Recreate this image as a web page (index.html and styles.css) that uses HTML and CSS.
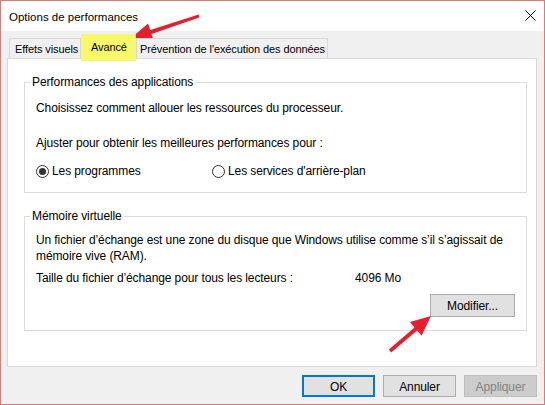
FILE: index.html
```html
<!DOCTYPE html>
<html lang="fr">
<head>
<meta charset="utf-8">
<title>Options de performances</title>
<link rel="stylesheet" href="styles.css">
</head>
<body>
<div class="window">
  <div class="titlebar">
    <span class="title">Options de performances</span>
    <svg class="close" width="11" height="11" viewBox="0 0 11 11"><path d="M0.5 0.5L10.5 10.5M10.5 0.5L0.5 10.5" stroke="#000" stroke-width="1" fill="none"/></svg>
  </div>
  <div class="content">
    <div class="tabs">
      <div class="tab tab-first">Effets visuels</div>
      <div class="tab tab-selected">Avancé</div>
      <div class="tab tab-last">Prévention de l'exécution des données</div>
    </div>
    <div class="panel">
      <fieldset class="group group-apps">
        <legend>Performances des applications</legend>
        <p class="line">Choisissez comment allouer les ressources du processeur.</p>
        <p class="line line-adjust">Ajuster pour obtenir les meilleures performances pour :</p>
        <div class="radios">
          <label class="radio radio-first"><span class="circle checked"></span>Les programmes</label>
          <label class="radio"><span class="circle"></span>Les services d'arrière-plan</label>
        </div>
      </fieldset>
      <fieldset class="group group-mem">
        <legend>Mémoire virtuelle</legend>
        <p class="line">Un fichier d’échange est une zone du disque que Windows utilise comme s’il s’agissait de mémoire vive (RAM).</p>
        <div class="size-row">
          <span>Taille du fichier d’échange pour tous les lecteurs :</span>
          <span>4096 Mo</span>
        </div>
        <div class="modify-row">
          <button class="btn btn-modify">Modifier...</button>
        </div>
      </fieldset>
    </div>
    <div class="footer">
      <button class="btn btn-default">OK</button>
      <button class="btn">Annuler</button>
      <button class="btn btn-disabled">Appliquer</button>
    </div>
  </div>
  <svg class="arrows" width="545" height="405" viewBox="0 0 545 405">
    <polygon fill="#e5202e" points="130,39 153.7,40.5 151.5,33.9 199.3,17.5 198.7,14.6 150.3,30.1 148.1,23.5"/>
    <polygon fill="#e5202e" points="431,316 421.6,335.8 417.1,330.5 391.2,352.4 388.8,349.6 414.5,327.5 410,322.1"/>
  </svg>
</div>
</body>
</html>
```

FILE: styles.css
```css
* { box-sizing: border-box; }
html, body { margin: 0; padding: 0; background: #f0f0f0; }
body {
  font-family: "Liberation Sans", Arial, sans-serif;
  font-size: 12px;
  line-height: 16px;
  letter-spacing: -0.1px;
  color: #000;
}
.window {
  position: relative;
  width: 545px;
  height: 405px;
  border: 1px solid #dc7b73;
  background: #f0f0f0;
  display: flex;
  flex-direction: column;
}
.titlebar {
  height: 30px;
  background: #fff;
  display: flex;
  align-items: center;
  justify-content: space-between;
  padding: 1px 8px 0 8px;
}
.title { font-size: 11.5px; letter-spacing: 0; }
.close { display: block; margin-top: -2px; }
.content {
  flex: 1;
  padding: 0 7px 0 6px;
  display: flex;
  flex-direction: column;
}
.tabs {
  height: 27px;
  display: flex;
  align-items: flex-end;
  padding-left: 2px;
  position: relative;
  z-index: 1;
  font-size: 11px;
}
.tab {
  height: 20px;
  border: 1px solid #d9d9d9;
  border-bottom: none;
  background: #f0f0f0;
  padding: 2px 0 0 5px;
  white-space: nowrap;
}
.tab-first { width: 72px; }
.tab-selected {
  width: 55px;
  height: 27px;
  margin-bottom: -3px;
  background: #f8f86a;
  border: none;
  padding: 5px 0 0 10px;
}
.tab-last { width: 192px; padding-left: 3px; }
.panel {
  height: 309px;
  background: #fff;
  border: 1px solid #d9d9d9;
  padding: 15px 9px 0 16px;
  display: flex;
  flex-direction: column;
}
.group {
  margin: 0;
  border: 1px solid #dcdcdc;
  padding: 10px 11px 0 11px;
  min-width: 0;
}
.group legend {
  padding: 0 2px;
  margin-left: -6px;
  line-height: 16px;
}
.group-apps { height: 119px; flex-shrink: 0; }
.group-mem { height: 123px; margin-top: 15px; padding-top: 8px; flex-shrink: 0; }
.line { margin: 0; }
.line-adjust { margin-top: 19px; }
.radios {
  margin-top: 12px;
  display: flex;
  align-items: center;
}
.radio {
  display: flex;
  align-items: center;
  gap: 3px;
}
.radio-first { width: 176px; }
.circle {
  width: 13px;
  height: 13px;
  border: 1px solid #333;
  border-radius: 50%;
  background: #fff;
  display: flex;
  align-items: center;
  justify-content: center;
}
.circle.checked::after {
  content: "";
  width: 7px;
  height: 7px;
  border-radius: 50%;
  background: #333;
}
.size-row {
  margin-top: 6px;
  display: grid;
  grid-template-columns: 319px auto;
}
.modify-row {
  margin-top: 8px;
  display: flex;
  justify-content: flex-end;
}
.btn {
  font-family: inherit;
  font-size: 12px;
  letter-spacing: -0.1px;
  color: #000;
  background: #e1e1e1;
  border: 1px solid #adadad;
  height: 22px;
  width: 73px;
  padding: 1px 0 0;
  margin: 0;
}
.btn-modify { width: 85px; height: 23px; }
.btn-default { border: 2px solid #0078d7; }
.btn-disabled { background: #cccccc; border-color: #bfbfbf; color: #838383; }
.footer {
  margin-top: 8px;
  display: flex;
  justify-content: flex-end;
  gap: 8px;
}
.arrows {
  position: absolute;
  left: -1px;
  top: -1px;
  pointer-events: none;
}
```
